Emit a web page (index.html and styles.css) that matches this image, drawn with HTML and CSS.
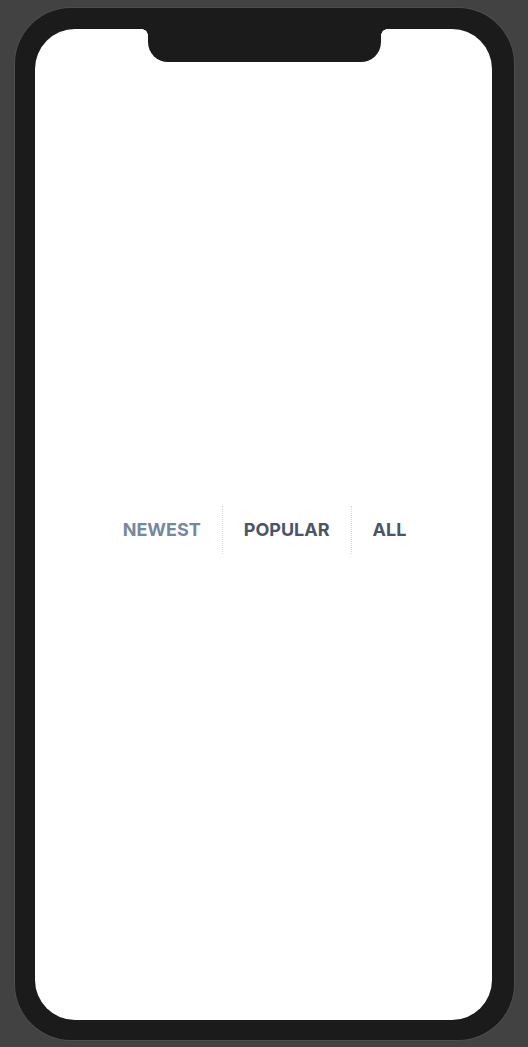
FILE: index.html
```html
<!DOCTYPE html>
<html>
<head>
<meta charset="utf-8">
<link rel="stylesheet" href="styles.css">
</head>
<body>
<div class="stage">
  <div class="phone">
    <div class="screen">
      <div class="notch"></div>
      <nav class="tabs">
        <span class="tab active">NEWEST</span>
        <span class="divider"></span>
        <span class="tab">POPULAR</span>
        <span class="divider"></span>
        <span class="tab">ALL</span>
      </nav>
    </div>
  </div>
</div>
</body>
</html>
```
FILE: styles.css
```css
html, body {
  margin: 0;
  padding: 0;
  background: #424242;
}
.stage {
  width: 528px;
  height: 1047px;
  padding: 8px 14px 0 15px;
  box-sizing: border-box;
}
.phone {
  width: 499px;
  height: 1032px;
  box-sizing: border-box;
  background: #1b1b1b;
  border-radius: 56px;
  padding: 21px 22px 20px 20px;
  box-shadow: 0 0 0 1px #4c4c4c;
}
.screen {
  position: relative;
  width: 100%;
  height: 100%;
  background: #ffffff;
  border-radius: 40px;
  display: flex;
  align-items: center;
  justify-content: center;
}
.notch {
  position: absolute;
  top: 0;
  left: 113px;
  width: 233px;
  height: 33px;
  background: #1b1b1b;
  border-radius: 0 0 20px 20px;
}
.notch::before,
.notch::after {
  content: "";
  position: absolute;
  top: 0;
  width: 6px;
  height: 6px;
}
.notch::before {
  left: -6px;
  background: radial-gradient(circle at 0 100%, transparent 5.5px, #1b1b1b 6px);
}
.notch::after {
  right: -6px;
  background: radial-gradient(circle at 100% 100%, transparent 5.5px, #1b1b1b 6px);
}
.tabs {
  display: flex;
  align-items: center;
  margin-top: 11px;
  margin-left: 2px;
  font-family: Inter, "Liberation Sans", sans-serif;
  font-weight: 700;
  font-size: 18px;
  color: #4a5568;
}
.tab {
  padding: 0 21px;
  line-height: 22px;
}
.tab:first-child { padding-left: 0; }
.tab:last-child { padding-right: 0; }
.tab.active { color: #7488a3; }
.divider {
  width: 0;
  height: 48px;
  border-left: 1px dotted #d5d9de;
}
```
